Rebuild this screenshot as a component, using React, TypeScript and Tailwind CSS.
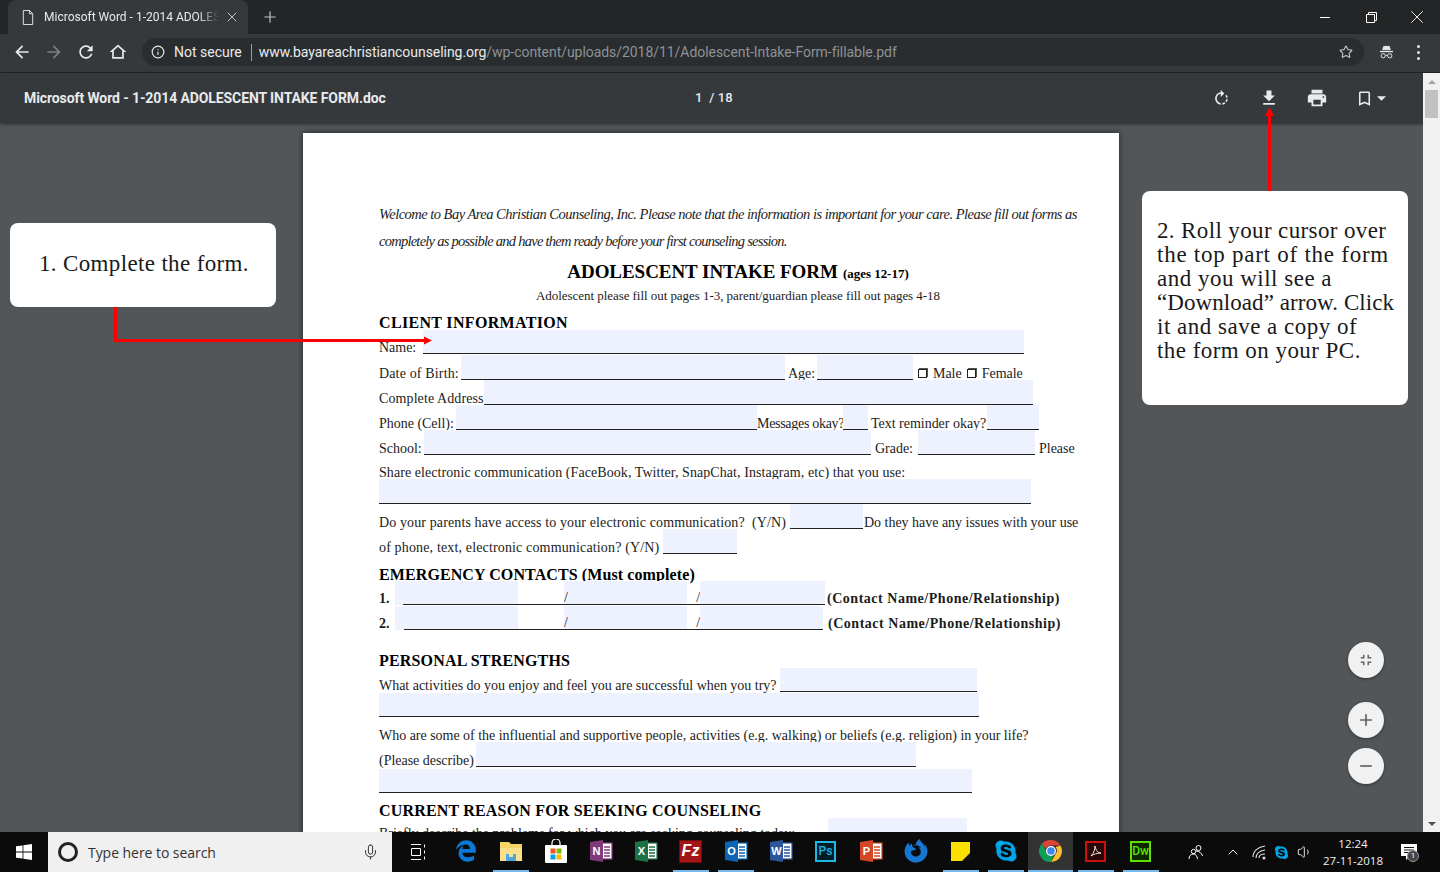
import React from 'react';
import clsx from 'clsx';
import { FaEdgeLegacy, FaFirefoxBrowser, FaSkype } from 'react-icons/fa';
import { Info, Star, Mic, ChevronUp, Volume1, Plus, X } from 'lucide-react';

const M = ({ d, className }: { d: string; className?: string }) => (
  <svg viewBox="0 0 24 24" fill="currentColor" className={className}>
    <path d={d} />
  </svg>
);

const Row = ({ className, children }: { className?: string; children?: React.ReactNode }) => (
  <div className={clsx('flex items-end leading-[12px] whitespace-nowrap', className)}>{children}</div>
);

const Field = ({ className }: { className?: string }) => (
  <div className={clsx('self-stretch bg-[#eef1fe] border-b border-[#222] shrink-0', className)} />
);

const Check = () => <span className="inline-block w-[9px] h-[9px] border border-[#222] shadow-[1px_-1px_0_#555] mb-[2px]" />;

const Contact = ({ n, first, last, closing }: { n: string; first: string; last: string; closing: string }) => (
  <Row className="h-[24px] font-bold">
    <span className="w-[16px]">{n}</span>
    <div className={clsx('self-stretch bg-[#eef1fe] shrink-0', first)}>
      <div className="h-full border-b border-[#222]" />
    </div>
    <div className="self-stretch w-[46px] border-b border-[#222]" />
    <div className="self-stretch w-[123px] bg-[#eef1fe] border-b border-[#222] flex items-end font-normal">/</div>
    <div className="self-stretch w-[13px] border-b border-[#222] flex items-end justify-end font-normal">/</div>
    <div className={clsx('self-stretch bg-[#eef1fe] border-b border-[#222]', last)} />
    <span className="tracking-[0.52px]">{closing}</span>
  </Row>
);

const Office = ({ bg, letter }: { bg: string; letter: string }) => (
  <svg viewBox="0 0 24 24" className="w-[24px] h-[24px]">
    <rect x="8" y="4" width="15" height="16" fill="#fff" stroke={bg} strokeWidth="1.2" />
    <path d="M15 8h6M15 11h6M15 14h6M15 17h6" stroke={bg} strokeWidth="1.4" />
    <path d="M1 3 14 1v22L1 21z" fill={bg} />
    <text x="7.5" y="16" textAnchor="middle" fontSize="11" fontWeight="700" fontFamily="Liberation Sans, sans-serif" fill="#fff">{letter}</text>
  </svg>
);

const TaskItem = ({ running, active, children }: { running?: boolean; active?: boolean; children: React.ReactNode }) => (
  <div className={clsx('w-[45px] h-10 flex flex-col items-center shrink-0', active && 'bg-[#333]')}>
    <div className="flex-1 flex items-center justify-center">{children}</div>
    <div className={clsx('h-[2px] shrink-0', running ? 'bg-[#76b9ed]' : 'bg-transparent', active ? 'w-full' : 'w-[36px]')} />
  </div>
);

const Store = () => (
  <svg viewBox="0 0 24 24" className="w-[24px] h-[24px]">
    <path d="M8 6V4a4 4 0 0 1 8 0v2" fill="none" stroke="#fff" strokeWidth="1.2" />
    <rect x="1" y="6" width="22" height="18" rx="1" fill="#fff" />
    <rect x="6.5" y="9.5" width="5" height="5" fill="#f25022" />
    <rect x="12.5" y="9.5" width="5" height="5" fill="#7fba00" />
    <rect x="6.5" y="15.5" width="5" height="5" fill="#00a4ef" />
    <rect x="12.5" y="15.5" width="5" height="5" fill="#ffb900" />
  </svg>
);

const Explorer = () => (
  <svg viewBox="0 0 24 24" className="w-[24px] h-[24px]">
    <path d="M1 3h9l2 2h11v17H1z" fill="#f6d365" />
    <rect x="1" y="9" width="22" height="13" fill="#fbe08c" />
    <rect x="7" y="15" width="10" height="7" fill="#4aa8e0" />
    <rect x="10" y="15" width="4" height="3" fill="#fbe08c" />
  </svg>
);

const Chrome = () => (
  <svg viewBox="0 0 24 24" className="w-[24px] h-[24px]">
    <path d="M12 1a11 11 0 0 1 9.5 5.5H12a5.5 5.5 0 0 0-5.2 3.6L3 4.6A11 11 0 0 1 12 1z" fill="#db4437" />
    <path d="M21.5 6.5A11 11 0 0 1 12 23l4.7-8.2A5.5 5.5 0 0 0 16.5 8z" fill="#fbc02d" />
    <path d="M12 23A11 11 0 0 1 3 4.6l4.7 8.2a5.5 5.5 0 0 0 6.6 3.7z" fill="#0f9d58" />
    <circle cx="12" cy="12" r="4.4" fill="#4285f4" stroke="#fff" strokeWidth="1.2" />
  </svg>
);

export default function App() {
  return (
    <div className="relative w-[1440px] h-[872px] overflow-hidden flex flex-col font-['Roboto',sans-serif] bg-[#525659]">
      {/* tab strip */}
      <div className="h-[34px] bg-[#232527] flex items-end shrink-0 text-white pl-[8px]">
        <div className="w-[240px] h-[34px] mt-auto bg-[#35393b] rounded-t-lg flex items-center pl-[14px]">
          <svg viewBox="0 0 12 16" className="w-[12px] h-[15px] shrink-0" fill="none" stroke="#e8eaed" strokeWidth="1">
            <path d="M1 .5h6.5L11 4v11.5H1zM7.5.5V4H11" />
          </svg>
          <span className="ml-[10px] text-[12px] text-[#e8eaed] whitespace-nowrap overflow-hidden w-[175px] shrink-0 [mask-image:linear-gradient(to_right,#000_88%,transparent)]">
            Microsoft Word - 1-2014 ADOLESCENT INTAKE FORM.doc
          </span>
          <X className="w-[16px] h-[16px] ml-[5px] shrink-0 text-[#bdc1c6]" strokeWidth={1.5} />
        </div>
        <Plus className="w-[18px] h-[18px] ml-[13px] mb-[8px] text-[#bdc1c6]" strokeWidth={1.6} />
        <div className="ml-auto flex h-[34px] items-center">
          <div className="w-[46px] flex justify-center"><div className="w-[10px] h-px bg-white" /></div>
          <div className="w-[46px] flex justify-center">
            <svg viewBox="0 0 11 11" className="w-[11px] h-[11px]" fill="none" stroke="#fff">
              <path d="M.5 2.5h8v8h-8zM2.5 2.5v-2h8v8h-2" />
            </svg>
          </div>
          <div className="w-[46px] flex justify-center"><X className="w-[22px] h-[22px] text-white" strokeWidth={1} /></div>
        </div>
      </div>

      {/* address bar */}
      <div className="h-[39px] bg-[#35393b] border-b border-[#232527] pb-[2px] shrink-0 flex items-center text-[#e8eaed]">
        <div className="flex w-[142px] shrink-0 items-center pl-[12px]">
          <M className="w-[20px] h-[20px] mr-[12px]" d="M20 11H7.83l5.59-5.59L12 4l-8 8 8 8 1.41-1.41L7.83 13H20v-2z" />
          <M className="w-[20px] h-[20px] mr-[12px] text-[#7b7f82]" d="M12 4l-1.41 1.41L16.17 11H4v2h12.17l-5.58 5.59L12 20l8-8z" />
          <M className="w-[20px] h-[20px] mr-[12px]" d="M17.65 6.35C16.2 4.9 14.21 4 12 4c-4.42 0-7.99 3.58-7.99 8s3.57 8 7.99 8c3.73 0 6.84-2.55 7.73-6h-2.08c-.82 2.33-3.04 4-5.65 4-3.31 0-6-2.69-6-6s2.69-6 6-6c1.66 0 3.14.69 4.22 1.78L13 11h7V4l-2.35 2.35z" />
          <M className="w-[20px] h-[20px]" d="M12 3 2 12h3v8h14v-8h3zM7 18v-7.8l5-4.5 5 4.5V18z" />
        </div>
        <div className="w-[1222px] h-[28px] bg-[#2a2d2f] rounded-full flex items-center pl-[9px] pr-[11px]">
          <Info className="w-[14px] h-[14px]" strokeWidth={2} />
          <span className="ml-[9px] text-[14px]">Not secure</span>
          <div className="w-px h-[17px] bg-[#9aa0a6] ml-[9px] mr-[7px]" />
          <span className="text-[14px] text-[#e8eaed] tracking-[-0.05px]">
            www.bayareachristiancounseling.org<span className="text-[#8d9296]">/wp-content/uploads/2018/11/Adolescent-Intake-Form-fillable.pdf</span>
          </span>
          <Star className="ml-auto w-[14px] h-[14px] text-[#bdc1c6]" strokeWidth={2} />
        </div>
        <div className="w-[44px] flex justify-center">
          <svg viewBox="0 0 16 16" className="w-[15px] h-[15px]" fill="none" stroke="#e8eaed">
            <path d="M4 5 5 1.5h6L12 5z" fill="#e8eaed" />
            <path d="M1 7h14" strokeWidth="1.4" />
            <circle cx="4.5" cy="11.5" r="2.3" />
            <circle cx="11.5" cy="11.5" r="2.3" />
            <path d="M6.8 11h2.4" />
          </svg>
        </div>
        <div className="w-[20px] flex flex-col gap-[3px] items-center">
          <span className="w-[3px] h-[3px] rounded-full bg-[#e8eaed]" />
          <span className="w-[3px] h-[3px] rounded-full bg-[#e8eaed]" />
          <span className="w-[3px] h-[3px] rounded-full bg-[#e8eaed]" />
        </div>
      </div>

      {/* pdf toolbar */}
      <div className="h-[50px] bg-[#35393b] shrink-0 flex items-center text-[#e8eaed] relative z-10 shadow-[0_1px_3px_rgba(0,0,0,0.5)]">
        <div className="w-[695px] pl-[24px] text-[14px] font-bold tracking-[-0.1px] whitespace-nowrap">Microsoft Word - 1-2014 ADOLESCENT INTAKE FORM.doc</div>
        <div className="text-[13px] font-medium tracking-[0.1px] w-[517px]">1&nbsp; /&nbsp;18</div>
        <M className="w-[19px] h-[19px]" d="M15.55 5.55L11 1v3.07C7.06 4.56 4 7.92 4 12s3.05 7.44 7 7.93v-2.02c-2.84-.48-5-2.94-5-5.91s2.16-5.43 5-5.91V10l4.55-4.45zM19.93 11c-.17-1.39-.72-2.73-1.62-3.89l-1.42 1.42c.54.75.88 1.6 1.02 2.47h2.02zM13 17.9v2.02c1.39-.17 2.74-.71 3.9-1.61l-1.44-1.44c-.75.54-1.59.89-2.46 1.03zm3.89-2.42l1.42 1.41c.9-1.16 1.45-2.5 1.62-3.89h-2.02c-.14.87-.48 1.72-1.02 2.48z" />
        <M className="w-[20px] h-[20px] ml-[28px]" d="M19 9h-4V3H9v6H5l7 7 7-7zM5 18v2h14v-2H5z" />
        <M className="w-[22px] h-[22px] ml-[27px]" d="M19 8H5c-1.66 0-3 1.34-3 3v6h4v4h12v-4h4v-6c0-1.66-1.34-3-3-3zm-3 11H8v-5h8v5zm3-7c-.55 0-1-.45-1-1s.45-1 1-1 1 .45 1 1-.45 1-1 1zm-1-9H6v4h12V3z" />
        <M className="w-[19px] h-[19px] ml-[27px]" d="M17 3H7c-1.1 0-1.99.9-1.99 2L5 21l7-3 7 3V5c0-1.1-.9-2-2-2zm0 15l-5-2.18L7 18V5h10v13z" />
        <svg viewBox="0 0 10 5" className="w-[9px] h-[5px] ml-[3px]" fill="#e8eaed"><path d="M0 0h10L5 5z" /></svg>
      </div>

      {/* viewer */}
      <div className="flex-1 min-h-0 flex">
        <div className="w-[1423px] flex justify-center pt-[10px] pr-[1px] overflow-hidden">
          <div className="w-[816px] h-[900px] shrink-0 bg-white shadow-[0_0_6px_rgba(0,0,0,0.6)] pl-[76px] pt-[68px] font-['Liberation_Serif',serif] text-[14px] text-[#1c1c1c] tracking-[-0.02px]">
            <div className="italic text-[14.5px] leading-[27px] h-[27px] tracking-[-0.52px] whitespace-nowrap">Welcome to Bay Area Christian Counseling, Inc. Please note that the information is important for your care. Please fill out forms as</div>
            <div className="italic text-[14.5px] leading-[27px] h-[27px] tracking-[-0.75px] whitespace-nowrap">completely as possible and have them ready before your first counseling session.</div>
            <div className="h-[29px] mt-[3px] flex items-center w-[718px] justify-center font-bold text-black whitespace-nowrap">
              <span className="text-[19px] tracking-[-0.05px]">ADOLESCENT INTAKE FORM</span>
              <span className="ml-[5px] text-[13px] mt-[2px]">(ages 12-17)</span>
            </div>
            <div className="h-[18px] leading-[18px] w-[718px] text-center text-[13px] tracking-[-0.05px]">Adolescent please fill out pages 1-3, parent/guardian please fill out pages 4-18</div>
            <div className="h-[25px] flex items-end"><span className="font-bold text-[16px] leading-[14px] text-black tracking-[0.33px]">CLIENT INFORMATION</span></div>

            <Row className="h-[24px]"><span className="w-[44px]">Name:</span><Field className="w-[601px]" /></Row>
            <Row className="h-[25px] mt-px">
              <span className="w-[82px] tracking-[0.15px]">Date of Birth:</span><Field className="w-[324px]" />
              <span className="w-[32px] pl-[3px]">Age:</span><Field className="w-[96px]" />
              <span className="ml-[5px] flex items-end"><Check /></span><span className="ml-[6px]">Male</span>
              <span className="ml-[5px] flex items-end"><Check /></span><span className="ml-[6px]">Female</span>
            </Row>
            <Row className="h-[25px]"><span className="w-[105px] tracking-[0.1px]">Complete Address</span><Field className="w-[549px]" /></Row>
            <Row className="h-[25px]">
              <span className="w-[77px]">Phone (Cell):</span><Field className="w-[301px]" />
              <span className="w-[86px] tracking-[-0.3px]">Messages okay?</span><Field className="w-[25px]" />
              <span className="w-[119px] pl-[3px]">Text reminder okay?</span><Field className="w-[52px]" />
            </Row>
            <Row className="h-[25px]">
              <span className="w-[45px]">School:</span><Field className="w-[447px]" />
              <span className="w-[47px] pl-[4px]">Grade:</span><Field className="w-[117px]" />
              <span className="pl-[4px]">Please</span>
            </Row>
            <Row className="h-[24px] tracking-[0.07px]">Share electronic communication (FaceBook, Twitter, SnapChat, Instagram, etc) that you use:</Row>
            <Row className="h-[25px]"><Field className="w-[652px]" /></Row>
            <Row className="h-[25px]">
              <span className="w-[411px] tracking-[0.12px]">Do your parents have access to your electronic communication?&nbsp; (Y/N)</span><Field className="w-[73px]" />
              <span className="pl-px">Do they have any issues with your use</span>
            </Row>
            <Row className="h-[25px]"><span className="w-[284px] tracking-[0.15px]">of phone, text, electronic communication? (Y/N)</span><Field className="w-[74px]" /></Row>
            <div className="h-[27px] flex items-end"><span className="font-bold text-[16px] leading-[12px] text-black tracking-[0.1px]">EMERGENCY CONTACTS (Must complete)</span></div>
            <Contact n="1." first="w-[123px] pl-[8px]" last="w-[125px] mr-[2px]" closing="(Contact Name/Phone/Relationship)" />
            <div className="mt-px">
              <Contact n="2." first="w-[123px] pl-[9px]" last="w-[123px] mr-[5px]" closing="(Contact Name/Phone/Relationship)" />
            </div>
            <div className="h-[38px] flex items-end"><span className="font-bold text-[16px] leading-[14px] text-black tracking-[0.17px]">PERSONAL STRENGTHS</span></div>
            <Row className="h-[24px]"><span className="w-[401px]">What activities do you enjoy and feel you are successful when you try?</span><Field className="w-[197px]" /></Row>
            <Row className="h-[24px] mt-px"><Field className="w-[600px]" /></Row>
            <Row className="h-[25px]">Who are some of the influential and supportive people, activities (e.g. walking) or beliefs (e.g. religion) in your life?</Row>
            <Row className="h-[25px]"><span className="w-[97px]">(Please describe)</span><Field className="w-[440px]" /></Row>
            <Row className="h-[24px] mt-[2px]"><Field className="w-[593px]" /></Row>
            <div className="h-[25px] flex items-end"><span className="font-bold text-[16px] leading-[14px] text-black tracking-[0.18px]">CURRENT REASON FOR SEEKING COUNSELING</span></div>
            <Row className="h-[24px] items-stretch">
              <span className="w-[449px] pt-[10px]">Briefly describe the problems for which you are seeking counseling today:</span>
              <Field className="w-[139px]" />
            </Row>
          </div>
        </div>

        {/* scrollbar */}
        <div className="w-[17px] bg-[#f1f1f1] flex flex-col items-center relative z-20 -mt-[50px]">
          <div className="h-[17px] flex items-center justify-center">
            <svg viewBox="0 0 8 4" className="w-[8px] h-[4px]" fill="#a3a3a3"><path d="M4 0l4 4H0z" /></svg>
          </div>
          <div className="w-[13px] h-[28px] bg-[#c1c1c1]" />
          <div className="mt-auto h-[17px] flex items-center justify-center">
            <svg viewBox="0 0 8 4" className="w-[8px] h-[4px]" fill="#505050"><path d="M0 0h8L4 4z" /></svg>
          </div>
        </div>
      </div>

      {/* taskbar */}
      <div className="h-10 bg-[#0b0b0b] shrink-0 flex items-center text-white relative z-30">
        <div className="w-[48px] flex justify-center">
          <svg viewBox="0 0 16 16" className="w-[16px] h-[16px]" fill="#fff">
            <path d="M0 2.3 6.6 1.4v6.2H0zM7.4 1.3 16 0v7.6H7.4zM0 8.4h6.6v6.2L0 13.7zM7.4 8.4H16V16l-8.6-1.3z" />
          </svg>
        </div>
        <div className="w-[344px] h-10 bg-[#f0f0f0] flex items-center pl-[10px] pr-[13px] text-[#333]">
          <div className="w-[20px] h-[20px] rounded-full border-[3px] border-[#222]" />
          <span className="ml-[10px] text-[14px] font-['Open_Sans',sans-serif] tracking-[-0.05px]">Type here to search</span>
          <Mic className="ml-auto w-[17px] h-[18px] text-[#333]" strokeWidth={1.4} />
        </div>
        <div className="w-[51px] flex justify-center">
          <svg viewBox="0 0 16 16" className="w-[16px] h-[16px]" fill="none" stroke="#fff">
            <path d="M1 .5h10M1 15.5h10M1.5 4.5h9v7h-9zM14.5 .5v3M14.5 6.5v3M14.5 12.5v3" />
          </svg>
        </div>
        <TaskItem><FaEdgeLegacy className="w-[22px] h-[24px] text-[#0a78d4]" /></TaskItem>
        <TaskItem running><Explorer /></TaskItem>
        <TaskItem><Store /></TaskItem>
        <TaskItem><Office bg="#80397b" letter="N" /></TaskItem>
        <TaskItem><Office bg="#1e7145" letter="X" /></TaskItem>
        <TaskItem running>
          <div className="w-[23px] h-[23px] bg-[#a31414] border border-[#6d0c0c] flex items-center justify-center text-[16px] font-bold italic text-white font-['Liberation_Sans',sans-serif]">Fz</div>
        </TaskItem>
        <TaskItem running><Office bg="#0b64b5" letter="O" /></TaskItem>
        <TaskItem><Office bg="#2b579a" letter="W" /></TaskItem>
        <TaskItem>
          <div className="w-[21px] h-[21px] border-2 border-[#1fb7e8] bg-[#001d26] text-[#1fb7e8] text-[12px] font-medium flex items-center justify-center">Ps</div>
        </TaskItem>
        <TaskItem><Office bg="#d24726" letter="P" /></TaskItem>
        <TaskItem><FaFirefoxBrowser className="w-[24px] h-[24px] text-[#1677d2]" /></TaskItem>
        <TaskItem running>
          <div className="w-[19px] h-[19px] bg-[#fce100] flex items-end justify-end">
            <svg viewBox="0 0 8 8" className="w-[8px] h-[8px]"><path d="M8 0v8H0z" fill="#111" /></svg>
          </div>
        </TaskItem>
        <TaskItem running><FaSkype className="w-[24px] h-[24px] text-[#00a5e8]" /></TaskItem>
        <TaskItem running active><Chrome /></TaskItem>
        <TaskItem running>
          <div className="w-[21px] h-[21px] border-2 border-[#cc1010] bg-[#2a0606] flex items-center justify-center">
            <svg viewBox="0 0 12 12" className="w-[12px] h-[12px]" fill="none" stroke="#e8e8e8"><path d="M1 11c3-3 4-7 4-10 1 5 3 7 6 7-4 0-7 1-10 3z" /></svg>
          </div>
        </TaskItem>
        <TaskItem running>
          <div className="w-[21px] h-[21px] border-2 border-[#5ce100] bg-[#0c2600] text-[#5ce100] text-[12px] font-medium flex items-center justify-center">Dw</div>
        </TaskItem>
        <div className="ml-[21px] w-[24px] flex justify-center">
          <svg viewBox="0 0 16 16" className="w-[16px] h-[16px]" fill="none" stroke="#fff">
            <circle cx="10.5" cy="4" r="2.5" /><circle cx="5.5" cy="7.5" r="2.2" />
            <path d="M1 15c0-3 2-5 4.5-5s3.5 2 4 5M8 7c3 0 6 2 6.5 5" />
          </svg>
        </div>
        <ChevronUp className="ml-[17px] w-[16px] h-[16px]" strokeWidth={1.4} />
        <svg viewBox="0 0 16 16" className="ml-[10px] w-[16px] h-[16px]" fill="none" stroke="#ddd" strokeWidth="1.1">
          <path d="M2 13C2 7 7 3 14 2M5 14c0-4 3-7 9-8M8 14c0-2 2-4 6-4" />
          <circle cx="13" cy="14" r="1" fill="#ddd" />
        </svg>
        <FaSkype className="ml-[7px] w-[15px] h-[15px] text-[#00a5e8]" />
        <Volume1 className="ml-[8px] w-[16px] h-[16px]" strokeWidth={1.3} />
        <div className="ml-[6px] w-[68px] text-center text-[11.5px] leading-[17px] font-['Open_Sans',sans-serif] text-[#f0f0f0]">
          <div>12:24</div>
          <div>27-11-2018</div>
        </div>
        <div className="ml-[14px] relative">
          <svg viewBox="0 0 16 16" className="w-[16px] h-[16px]" fill="#fff">
            <path d="M0 0h16v12H9l-4 4v-4H0z" /><path d="M3 3.5h10M3 6h10M3 8.5h7" stroke="#111" strokeWidth="1" />
          </svg>
          <span className="absolute left-[6px] top-[6px] w-[12px] h-[12px] rounded-full bg-[#444] border border-[#999] text-[8px] leading-[10px] text-center text-white">1</span>
        </div>
      </div>

      {/* floating pdf buttons */}
      <div className="absolute left-[1348px] top-[642px] flex flex-col text-[#5f6368]">
        <div className="w-9 h-9 rounded-full bg-[#f1f1f1] shadow-[0_1px_3px_rgba(0,0,0,0.4)] flex items-center justify-center">
          <M className="w-[18px] h-[18px]" d="M5 16h3v3h2v-5H5v2zm3-8H5v2h5V5H8v3zm6 11h2v-3h3v-2h-5v5zm2-11V5h-2v5h5V8h-3z" />
        </div>
        <div className="w-9 h-9 mt-[24px] rounded-full bg-[#f1f1f1] shadow-[0_1px_3px_rgba(0,0,0,0.4)] flex items-center justify-center">
          <M className="w-[20px] h-[20px]" d="M19 13h-6v6h-2v-6H5v-2h6V5h2v6h6v2z" />
        </div>
        <div className="w-9 h-9 mt-[10px] rounded-full bg-[#f1f1f1] shadow-[0_1px_3px_rgba(0,0,0,0.4)] flex items-center justify-center">
          <M className="w-[20px] h-[20px]" d="M19 13H5v-2h14v2z" />
        </div>
      </div>

      {/* callouts */}
      <div className="absolute left-[10px] top-[223px] w-[266px] h-[84px] bg-white rounded-lg pl-[29px] pt-[27px] font-['Liberation_Serif',serif] text-[23px] leading-[28px] tracking-[0.35px] text-[#1a1a1a] whitespace-nowrap">
        1. Complete the form.
      </div>
      <div className="absolute left-[1142px] top-[191px] w-[266px] h-[214px] bg-white rounded-lg pl-[15px] pt-[28px] font-['Liberation_Serif',serif] text-[23px] leading-[24px] text-[#1a1a1a] whitespace-nowrap">
        <div className="tracking-[0.37px]">2. Roll your cursor over</div>
        <div className="tracking-[0.75px]">the top part of the form</div>
        <div className="tracking-[0.5px]">and you will see a</div>
        <div className="tracking-[0.07px]">“Download” arrow. Click</div>
        <div className="tracking-[0.5px]">it and save a copy of</div>
        <div className="tracking-[0.45px]">the form on your PC.</div>
      </div>

      {/* red arrows */}
      <div className="absolute z-40 left-[114px] top-[307px] w-[3px] h-[35px] bg-[#f00]" />
      <div className="absolute z-40 left-[114px] top-[339px] w-[312px] h-[3px] bg-[#f00]" />
      <svg viewBox="0 0 8 8" className="absolute z-40 left-[424px] top-[336px] w-[8px] h-[9px]" fill="#f00"><path d="M0 0l8 4-8 4z" /></svg>
      <div className="absolute z-40 left-[1268px] top-[115px] w-[3px] h-[76px] bg-[#f00]" />
      <svg viewBox="0 0 8 8" className="absolute z-40 left-[1265px] top-[107px] w-[9px] h-[9px]" fill="#f00"><path d="M4 0l4 8H0z" /></svg>
    </div>
  );
}
